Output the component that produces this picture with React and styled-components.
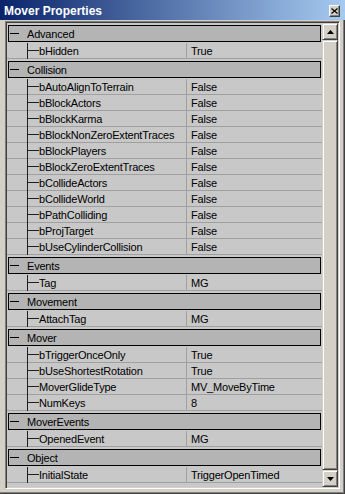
import React from 'react';
import styled, { createGlobalStyle } from 'styled-components';

const groups = [
  { name: 'Advanced', props: [['bHidden', 'True']] },
  {
    name: 'Collision',
    props: [
      ['bAutoAlignToTerrain', 'False'],
      ['bBlockActors', 'False'],
      ['bBlockKarma', 'False'],
      ['bBlockNonZeroExtentTraces', 'False'],
      ['bBlockPlayers', 'False'],
      ['bBlockZeroExtentTraces', 'False'],
      ['bCollideActors', 'False'],
      ['bCollideWorld', 'False'],
      ['bPathColliding', 'False'],
      ['bProjTarget', 'False'],
      ['bUseCylinderCollision', 'False'],
    ],
  },
  { name: 'Events', props: [['Tag', 'MG']] },
  { name: 'Movement', props: [['AttachTag', 'MG']] },
  {
    name: 'Mover',
    props: [
      ['bTriggerOnceOnly', 'True'],
      ['bUseShortestRotation', 'True'],
      ['MoverGlideType', 'MV_MoveByTime'],
      ['NumKeys', '8'],
    ],
  },
  { name: 'MoverEvents', props: [['OpenedEvent', 'MG']] },
  { name: 'Object', props: [['InitialState', 'TriggerOpenTimed']] },
];

export default function App() {
  return (
    <>
      <GlobalStyle />
      <Window>
        <TitleBar>
          <Title>Mover Properties</Title>
          <CloseButton>
            <svg width="7" height="6" viewBox="0 0 7 6">
              <path d="M0.5 0.5 L6.5 5.5 M6.5 0.5 L0.5 5.5" stroke="#000" strokeWidth="1.2" fill="none" />
            </svg>
          </CloseButton>
        </TitleBar>
        <Frame>
          <List>
            {groups.map((group) => (
              <div key={group.name}>
                <GroupHeader>
                  <Minus />
                  <span>{group.name}</span>
                </GroupHeader>
                {group.props.map(([name, value]) => (
                  <PropRow key={name}>
                    <Gutter />
                    <Branch />
                    <NameCell>{name}</NameCell>
                    <ValueCell>{value}</ValueCell>
                  </PropRow>
                ))}
              </div>
            ))}
          </List>
          <ScrollBar>
            <ArrowButton>
              <svg width="7" height="4" viewBox="0 0 7 4">
                <path d="M3.5 0 L7 4 L0 4 Z" fill="#000" />
              </svg>
            </ArrowButton>
            <Thumb />
            <ArrowButton>
              <svg width="7" height="4" viewBox="0 0 7 4">
                <path d="M0 0 L7 0 L3.5 4 Z" fill="#000" />
              </svg>
            </ArrowButton>
          </ScrollBar>
        </Frame>
      </Window>
    </>
  );
}

// Styles
const GlobalStyle = createGlobalStyle`
  body {
    margin: 0;
    background: #D4D0C8;
    font-family: "Liberation Sans", Arial, sans-serif;
  }
`;
const Window = styled.div`
  width: 345px;
  height: 494px;
  box-sizing: border-box;
  background: #D4D0C8;
  box-shadow: inset -1px -1px 0 #404040, inset -2px -2px 0 #808080;
  font-size: 11px;
  color: #000;
`;
const TitleBar = styled.div`
  height: 20px;
  margin-bottom: 1px;
  display: flex;
  align-items: center;
  justify-content: space-between;
  padding: 0 5px 0 4px;
  background: linear-gradient(to right, #0A246A, #A6CAF0);
`;
const Title = styled.span`
  color: #fff;
  font-weight: bold;
  font-size: 12px;
  padding-top: 1px;
`;
const CloseButton = styled.div`
  width: 11px;
  height: 12px;
  margin-top: 2px;
  box-sizing: border-box;
  display: flex;
  align-items: center;
  justify-content: center;
  background: #D4D0C8;
  border: 1px solid;
  border-color: #fff #404040 #404040 #fff;
  box-shadow: inset -1px -1px 0 #808080;
`;
const Frame = styled.div`
  margin-left: 5px;
  width: 335px;
  height: 468px;
  box-sizing: border-box;
  display: flex;
  border-top: 1px solid #808080;
  border-left: 1px solid #808080;
  border-right: 1px solid #fff;
  border-bottom: 1px solid #fff;
  box-shadow: inset 1px 1px 0 #404040, inset -1px -1px 0 #D4D0C8;
  padding: 1px;
`;
const List = styled.div`
  flex: 1;
  background: #C8C8C8;
  overflow: hidden;
  letter-spacing: -0.2px;
`;
const GroupHeader = styled.div`
  height: 17px;
  box-sizing: border-box;
  margin: 2px 1px 1px 1px;
  padding-top: 1px;
  border: 1px solid #000;
  background: #B4B4B4;
  display: flex;
  align-items: center;
  gap: 8px;
  line-height: 14px;
`;
const Minus = styled.span`
  width: 9px;
  height: 1px;
  margin-left: 1px;
  margin-top: -1px;
  background: #000;
`;
const PropRow = styled.div`
  height: 16px;
  display: grid;
  grid-template-columns: 20px 12px 148px 1fr;
  line-height: 13px;
`;
const Gutter = styled.div`
  border-bottom: 1px solid #A0A0A0;
`;
const Branch = styled.div`
  box-sizing: border-box;
  border-left: 1px solid #202020;
  background:
    linear-gradient(#202020, #202020) 0 7px / 100% 1px no-repeat,
    linear-gradient(#A0A0A0, #A0A0A0) 0 15px / 100% 1px no-repeat;
`;
const NameCell = styled.div`
  box-sizing: border-box;
  padding-top: 2px;
  border-bottom: 1px solid #A0A0A0;
  border-right: 1px solid #A0A0A0;
  white-space: nowrap;
`;
const ValueCell = styled.div`
  box-sizing: border-box;
  padding: 2px 0 0 4px;
  border-bottom: 1px solid #A0A0A0;
  white-space: nowrap;
`;
const ScrollBar = styled.div`
  width: 16px;
  display: flex;
  flex-direction: column;
  background: #D4D0C8;
`;
const ArrowButton = styled.div`
  height: 17px;
  box-sizing: border-box;
  display: flex;
  align-items: center;
  justify-content: center;
  background: #D4D0C8;
  border: 1px solid;
  border-color: #D4D0C8 #404040 #404040 #D4D0C8;
  box-shadow: inset 1px 1px 0 #fff, inset -1px -1px 0 #808080;
`;
const Thumb = styled.div`
  flex: 1;
  box-sizing: border-box;
  background: #D4D0C8;
  border: 1px solid;
  border-color: #D4D0C8 #404040 #404040 #D4D0C8;
  box-shadow: inset 1px 1px 0 #fff, inset -1px -1px 0 #808080;
`;
